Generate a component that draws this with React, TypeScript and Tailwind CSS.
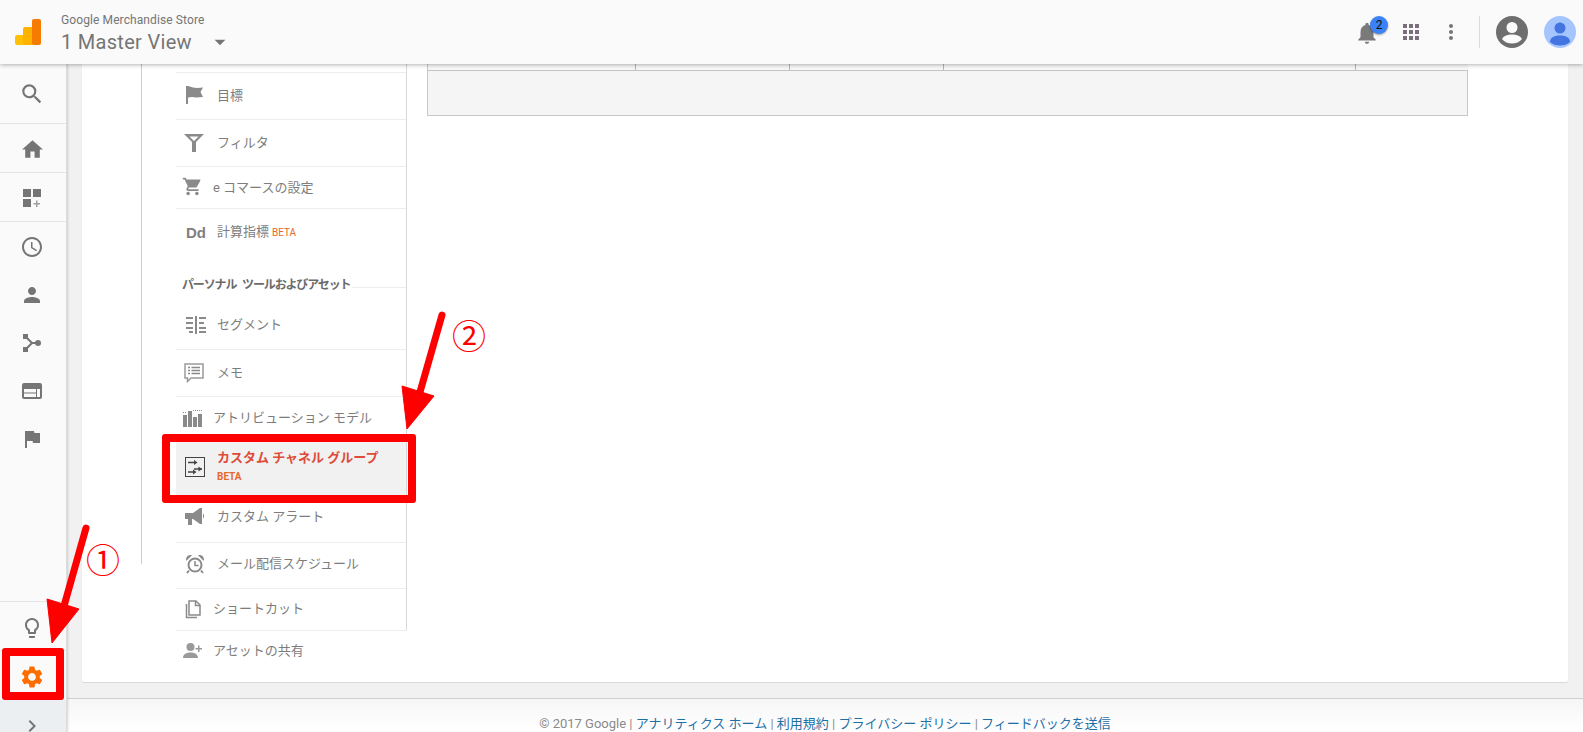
import React from 'react';
import {
  MdSearch, MdHome, MdAccessTime, MdPerson, MdFlag, MdLightbulbOutline, MdSettings,
  MdChevronRight, MdShoppingCart, MdNotifications, MdMoreVert, MdArrowDropDown,
} from 'react-icons/md';

const GRAY = '#757575';
const MENU = '#8a8a8a';

const DashboardAdd = () => (
  <svg width="24" height="24" viewBox="0 0 24 24">
    <g fill={GRAY}>
      <rect x="3" y="3" width="8" height="8" />
      <rect x="13" y="3" width="8" height="8" />
      <rect x="3" y="13" width="8" height="8" />
    </g>
    <path d="M16 14.5h1.5V17H20v1.500h-2.500V21H16v-2.500h-2.500V17H16z" fill="#9e9e9e" />
  </svg>
);

const Fork = () => (
  <svg width="24" height="24" viewBox="0 0 24 24">
    <path d="M6 6l6 6h6M6 18l6-6" fill="none" stroke={GRAY} strokeWidth="2" />
    <rect x="3" y="3" width="5" height="5" fill={GRAY} />
    <rect x="3" y="16" width="5" height="5" fill={GRAY} />
    <circle cx="18" cy="12" r="3" fill={GRAY} />
  </svg>
);

const Layout = () => (
  <svg width="24" height="24" viewBox="0 0 24 24">
    <rect x="2" y="4" width="20" height="16" rx="2" fill={GRAY} />
    <rect x="4" y="10" width="12" height="3.500" fill="#fafafa" />
    <rect x="4" y="14.500" width="12" height="3.500" fill="#fafafa" />
    <rect x="17" y="10" width="3" height="8" fill="#fafafa" />
  </svg>
);

const MenuFlag = () => (
  <svg width="20" height="20" viewBox="0 0 20 20">
    <path d="M1 0h2v18H1zM3 0l5 1.500 4 .5 6-.5-2.500 4.500 2.500 5-7 .5-4-.5-4 .5z" fill={MENU} />
  </svg>
);

const Funnel = () => (
  <svg width="20" height="20" viewBox="0 0 20 20">
    <path fillRule="evenodd" d="M0 1h20l-8 8v10H8V9zM5.500 3.500h9L10 8z" fill={MENU} />
  </svg>
);

const SegmentIcon = () => (
  <svg width="20" height="20" viewBox="0 0 20 20">
    <g fill={MENU}>
      <rect x="0" y="2" width="7" height="2" />
      <rect x="0" y="7" width="7" height="2" />
      <rect x="0" y="12" width="7" height="2" />
      <rect x="3" y="16" width="4" height="2" />
      <rect x="9" y="1" width="2" height="18" />
      <rect x="13" y="2" width="7" height="2" />
      <rect x="13" y="7" width="5" height="2" />
      <rect x="13" y="12" width="7" height="2" />
      <rect x="13" y="16" width="7" height="2" />
    </g>
  </svg>
);

const MemoIcon = () => (
  <svg width="20" height="20" viewBox="0 0 20 20">
    <path d="M1 1h18v14H7l-3.500 3.500V15H1z" fill="#fff" stroke="#9a9a9a" strokeWidth="1.500" />
    <path d="M4 4.500h2M7.500 4.500H16M4 7.500h2M7.500 7.500H16M4 10.500h2M7.500 10.500H16" stroke={MENU} strokeWidth="1.500" />
  </svg>
);

const AttributionIcon = () => (
  <svg width="20" height="20" viewBox="0 0 20 20">
    <g fill={MENU}>
      <rect x="0" y="7" width="4" height="12" />
      <rect x="5" y="3" width="4" height="16" />
      <rect x="10" y="9" width="4" height="10" />
      <rect x="15" y="6" width="4" height="13" />
    </g>
    <path d="M0 4.500h4M10 2.500h9" stroke={MENU} strokeDasharray="1 1" />
  </svg>
);

const ChannelIcon = () => (
  <svg width="20" height="20" viewBox="0 0 20 20">
    <rect x="0.500" y="0.500" width="19" height="19" fill="none" stroke="#444" />
    <path d="M3 5.500h7M9 12h8M3 15h7" stroke="#444" strokeWidth="1.500" />
    <path d="M9 3l3.500 2.500L9 8zM13.500 9.500L17 12l-3.500 2.500zM8 12.500l3.500 2.500L8 17.500z" fill="#444" />
  </svg>
);

const Megaphone = () => (
  <svg width="20" height="20" viewBox="0 0 20 20">
    <path d="M0 6h8l7-5h2v16h-2l-7-5H7v6H3v-6H0zM18 6.500c1.500 1 1.500 4 0 5z" fill={MENU} />
  </svg>
);

const AlarmIcon = () => (
  <svg width="20" height="20" viewBox="0 0 20 20">
    <circle cx="10" cy="11" r="6.500" fill="none" stroke={MENU} strokeWidth="2" />
    <path d="M10 7v4.500h3.500" fill="none" stroke={MENU} strokeWidth="1.500" />
    <path d="M1 5.500C1 3 3 1 5.500 1c.8 0 1.500.2 1.500.2L1.500 6.800A3 3 0 0 1 1 5.500zM19 5.500C19 3 17 1 14.500 1c-.8 0-1.500.2-1.500.2l5.500 5.600c.3-.4.5-.8.500-1.300z" fill={MENU} />
    <path d="M4 16.500l-2 2.500M16 16.500l2 2.500" stroke={MENU} strokeWidth="2" />
  </svg>
);

const CopyIcon = () => (
  <svg width="20" height="20" viewBox="0 0 20 20">
    <path d="M6 2h7l4 4v10H6z" fill="none" stroke={MENU} strokeWidth="1.500" />
    <path d="M12.500 2v4.500H17M3.500 5v13.500H14" fill="none" stroke={MENU} strokeWidth="1.500" />
  </svg>
);

const ShareIcon = () => (
  <svg width="20" height="20" viewBox="0 0 20 20">
    <circle cx="7.500" cy="6" r="4" fill="#9a9a9a" />
    <path d="M0 17c0-4 3.500-5.500 7.500-5.500S15 13 15 17zM15 4.500h1.500v2.500H19v1.500h-2.500V11H15V8.500h-2.500V7H15z" fill="#9a9a9a" />
  </svg>
);

const rows = [
  { label: '目標', icon: <MenuFlag />, rowClass: 'h-[47px] border-b', iconClass: 'w-[41px] pl-[9px]' },
  { label: 'フィルタ', icon: <Funnel />, rowClass: 'h-[47px] border-b', iconClass: 'w-[41px] pl-[8px]' },
  { label: 'e コマースの設定', icon: <MdShoppingCart size={21} color={MENU} style={{ transform: 'translateY(-1px)' }} />, rowClass: 'h-[42px] border-b', iconClass: 'w-[37px] pl-[6px]' },
  {
    label: '計算指標',
    icon: <span className="text-[15px] font-bold leading-none text-[#808080] font-['Liberation_Sans',sans-serif]">Dd</span>,
    rowClass: 'h-[48px] pb-[2px]',
    iconClass: 'w-[41px] pl-[10px]',
    beta: true,
  },
];

const rowsBelow = [
  { label: 'セグメント', icon: <SegmentIcon />, rowClass: 'h-[56px] border-b pt-[7px]', iconClass: 'w-[41px] pl-[10px]' },
  { label: 'メモ', icon: <MemoIcon />, rowClass: 'h-[47px] border-b', iconClass: 'w-[41px] pl-[8px]' },
  { label: 'アトリビューション モデル', icon: <AttributionIcon />, rowClass: 'h-[45px] pb-[4px]', iconClass: 'w-[37px] pl-[7px]' },
];

const rowsAfter = [
  { label: 'カスタム アラート', icon: <Megaphone />, rowClass: 'h-[48px] border-b pb-[4px]', iconClass: 'w-[41px] pl-[9px]' },
  { label: 'メール配信スケジュール', icon: <AlarmIcon />, rowClass: 'h-[46px] border-b pb-[3px]', iconClass: 'w-[41px] pl-[9px]' },
  { label: 'ショートカット', icon: <CopyIcon />, rowClass: 'h-[41px] pb-[1px]', iconClass: 'w-[37px] pl-[7px]' },
];

type Row = { label: string; icon: React.ReactNode; rowClass: string; iconClass: string; beta?: boolean };

function MenuRow({ row }: { row: Row }) {
  return (
    <div className={`flex items-center border-[#eeeeee] ${row.rowClass}`}>
      <div className={`flex items-center shrink-0 ${row.iconClass}`}>{row.icon}</div>
      <span className="text-[13px] text-[#7d7d7d] whitespace-nowrap">{row.label}</span>
      {row.beta && <span className="ml-[3px] mt-[1px] text-[10px] text-[#e8682a]">BETA</span>}
    </div>
  );
}

function SideItem({ children, className = '' }: { children: React.ReactNode; className?: string }) {
  return <div className={`flex items-center justify-center shrink-0 pr-[2px] ${className}`}>{children}</div>;
}

function Sidebar() {
  return (
    <aside className="w-[67px] shrink-0 flex flex-col bg-[#fafafa] border-r border-[#dcdcdc] shadow-[1px_0_2px_rgba(0,0,0,0.15)] z-10">
      <SideItem className="h-[60px] border-b border-[#e5e5e5]"><MdSearch size={26} color={GRAY} /></SideItem>
      <SideItem className="h-[49px] border-b border-[#e5e5e5] pt-[2px]"><MdHome size={25} color={GRAY} /></SideItem>
      <SideItem className="h-[49px] border-b border-[#e5e5e5] pt-[2px]"><DashboardAdd /></SideItem>
      <SideItem className="h-[49px]"><MdAccessTime size={24} color={GRAY} /></SideItem>
      <SideItem className="h-[48px]"><MdPerson size={24} color={GRAY} /></SideItem>
      <SideItem className="h-[48px]"><Fork /></SideItem>
      <SideItem className="h-[48px]"><Layout /></SideItem>
      <SideItem className="h-[48px]"><MdFlag size={24} color={GRAY} /></SideItem>
      <div className="flex-1 border-b border-[#e5e5e5]" />
      <SideItem className="h-[49px] border-b border-[#e5e5e5] pt-[3px]"><MdLightbulbOutline size={24} color={GRAY} /></SideItem>
      <SideItem className="h-[49px] pt-[2px]"><MdSettings size={26} color="#ff6d00" /></SideItem>
      <SideItem className="h-[32px] bg-[#eceff1] pt-[20px]"><MdChevronRight size={24} color={GRAY} /></SideItem>
    </aside>
  );
}

function Header() {
  return (
    <header className="relative z-20 h-[64px] shrink-0 flex items-center bg-[#fafafa] shadow-[0_1px_4px_rgba(0,0,0,0.3)]">
      <svg width="26" height="26" viewBox="0 0 26 26" className="ml-[15px]">
        <rect x="0" y="16" width="10" height="10" rx="2" fill="#ffc107" />
        <rect x="8" y="8" width="11" height="18" rx="2" fill="#ffb300" />
        <rect x="17" y="0" width="9" height="26" rx="2" fill="#f57c00" />
      </svg>
      <div className="ml-[20px] pt-[3px] flex flex-col text-[#757575]">
        <span className="text-[12px] leading-[14px] tracking-[0.1px]">Google Merchandise Store</span>
        <span className="flex items-center mt-[2px] text-[20px] leading-[24px] tracking-[0.3px]">
          1 Master View
          <MdArrowDropDown size={26} color={GRAY} className="ml-[15px]" />
        </span>
      </div>
      <div className="ml-auto flex items-center">
        <div className="relative w-[24px] h-[24px]">
          <MdNotifications size={26} color="#7a7a7a" />
          <span className="absolute -top-[4px] left-[16px] w-[18px] h-[18px] rounded-full bg-[#3b82f6] text-[#111] text-[12px] leading-[18px] text-center shadow-[0_1px_2px_rgba(0,0,0,0.4)]">2</span>
        </div>
        <div className="ml-[25px] grid grid-cols-3 gap-[2px]">
          {Array.from({ length: 9 }).map((_, i) => (
            <span key={i} className="w-[4px] h-[4px] bg-[#7a6f7a]" />
          ))}
        </div>
        <MdMoreVert size={24} color={GRAY} className="ml-[20px]" />
        <div className="ml-[16px] w-px h-[32px] bg-[#dadada]" />
        <svg width="32" height="32" viewBox="0 0 32 32" className="ml-[16px]">
          <circle cx="16" cy="16" r="16" fill="#6e6e6e" />
          <circle cx="16" cy="11.500" r="5.500" fill="#fafafa" />
          <path d="M6 23c2-3.500 6-4.500 10-4.500s8 1 10 4.500c-2.500 3-6 4.500-10 4.500S8.500 26 6 23z" fill="#fafafa" />
        </svg>
        <svg width="32" height="32" viewBox="0 0 32 32" className="ml-[16px] mr-[7px]">
          <circle cx="16" cy="16" r="16" fill="#a5c5ff" />
          <circle cx="16" cy="12" r="5.500" fill="#4374e0" />
          <path d="M6 26c0-5 5-6.500 10-6.500S26 21 26 26c-2.500 2.500-6 3.500-10 3.500S8.500 28.500 6 26z" fill="#4374e0" />
        </svg>
      </div>
    </header>
  );
}

function Table() {
  return (
    <div className="ml-[20px] w-[1041px] h-[52px] flex flex-col border-x border-b border-[#c8c8c8] bg-[#f5f5f5]">
      <div className="h-[7px] shrink-0 flex border-b border-[#c4c4c4] bg-[#f8f8f8] -mr-px">
        <div className="w-[208px] border-r border-[#b5b5b5]" />
        <div className="w-[154px] border-r border-[#b5b5b5]" />
        <div className="w-[154px] border-r border-[#b5b5b5]" />
        <div className="w-[412px] border-r border-[#b5b5b5]" />
      </div>
    </div>
  );
}

function Footer() {
  return (
    <footer className="h-[34px] shrink-0 border-t border-[#cfcfcf] bg-gradient-to-b from-[#f6f6f6] to-[#ffffff] pt-[16px] text-center text-[13px] leading-[18px] text-[#8a8a8a] whitespace-nowrap">
      © 2017 Google | <a className="text-[#1d6fa8]">アナリティクス ホーム</a> | <a className="text-[#1d6fa8]">利用規約</a> | <a className="text-[#1d6fa8]">プライバシー ポリシー</a> | <a className="text-[#1d6fa8]">フィードバックを送信</a>
    </footer>
  );
}

// 説明用の赤い矢印と枠
function Annotations() {
  return (
    <>
      <svg width="1583" height="732" className="absolute inset-0 z-30 pointer-events-none">
        <g fill="#ff0000" stroke="#ff0000">
          <path d="M86 528L64 606M442 315L420 392" strokeWidth="7" strokeLinecap="round" fill="none" />
          <path d="M47 599L79 609L52 643zM402 386L434 396L407 429z" strokeWidth="1" />
        </g>
      </svg>
      <div className="absolute z-30 left-[2px] top-[648px] w-[62px] h-[52px] border-[8px] border-[#ff0000] rounded-[3px]" />
      <div className="absolute z-30 left-[162px] top-[434px] w-[254px] h-[69px] border-[8px] border-[#ff0000] rounded-[3px]" />
      <span className="absolute z-30 left-[86px] top-[538px] text-[34px] leading-[46px] text-[#ff0000]">①</span>
      <span className="absolute z-30 left-[452px] top-[314px] text-[34px] leading-[46px] text-[#ff0000]">②</span>
    </>
  );
}

export default function App() {
  return (
    <div className="relative h-screen overflow-hidden flex flex-col font-[Roboto,'Noto_Sans_CJK_JP',sans-serif]">
      <Header />
      <div className="flex flex-1 min-h-0">
        <Sidebar />
        <div className="flex-1 min-w-0 flex flex-col bg-[#f1f1f1]">
          <main className="h-[618px] mx-[15px] shrink-0 flex items-start bg-white rounded-b-[2px] shadow-[0_1px_1px_rgba(0,0,0,0.1)]">
            <div className="ml-[59px] w-px h-[500px] bg-[#cccccc]" />
            <div className="ml-[34px] w-[231px] shrink-0">
              <div className="border-r border-[#d8d8d8]">
                <div className="h-[9px] border-b border-[#eeeeee]" />
                {rows.map(r => <MenuRow key={r.label} row={r} />)}
                <div className="h-[37px] flex items-start">
                  <span className="text-[12px] leading-[18px] font-bold text-[#6b6b6b] mr-[2px] ml-[6px] mt-[19px] whitespace-nowrap tracking-[-1.15px] [word-spacing:4px]">パーソナル ツールおよびアセット</span>
                  <div className="flex-1 mt-[30px] border-t border-[#eeeeee]" />
                </div>
                {rowsBelow.map(r => <MenuRow key={r.label} row={r} />)}
                <div className="h-[53px] bg-[#f1f1f1] flex items-start">
                  <div className="w-[41px] pl-[9px] pt-[15px] shrink-0"><ChannelIcon /></div>
                  <div className="flex flex-col pt-[6px]">
                    <span className="text-[13px] leading-[20px] font-bold text-[#dd4b39] whitespace-nowrap">カスタム チャネル グループ</span>
                    <span className="text-[10px] leading-[12px] mt-[3px] font-bold text-[#e8682a]">BETA</span>
                  </div>
                </div>
                {rowsAfter.map(r => <MenuRow key={r.label} row={r} />)}
              </div>
              <div className="h-[42px] pb-[2px] flex items-center border-t border-[#eeeeee]">
                <div className="w-[37px] pl-[7px] shrink-0"><ShareIcon /></div>
                <span className="text-[13px] text-[#7d7d7d]">アセットの共有</span>
              </div>
            </div>
            <Table />
          </main>
          <div className="h-[16px] shrink-0" />
          <Footer />
        </div>
      </div>
      <Annotations />
    </div>
  );
}
